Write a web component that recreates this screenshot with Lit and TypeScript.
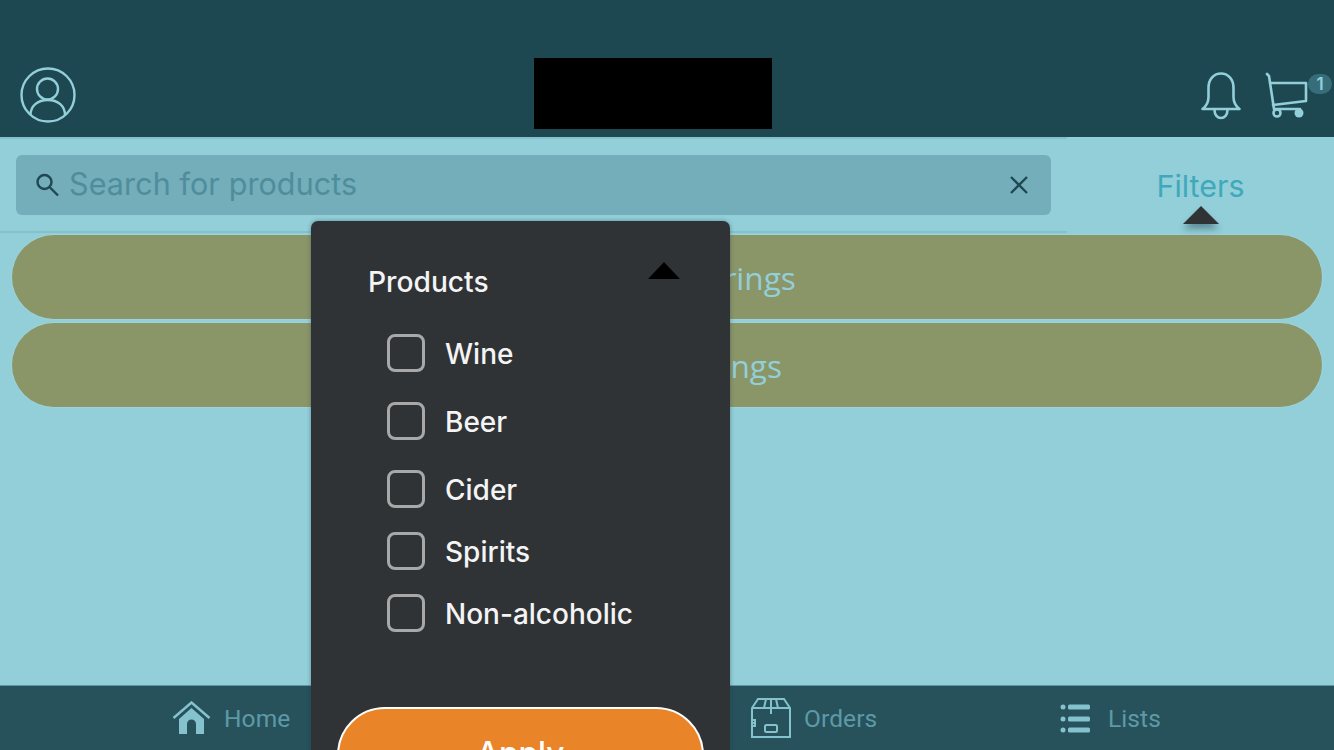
import { LitElement, html, css, svg } from 'lit';
import { customElement } from 'lit/decorators.js';

const FILTERS = ['Wine', 'Beer', 'Cider', 'Spirits', 'Non-alcoholic'];

@customElement('app-root')
export class AppRoot extends LitElement {
  static styles = css`
    :host {
      display: block;
      position: relative;
      width: 1334px;
      height: 750px;
      overflow: hidden;
      background: #92cfd9;
      font-family: Inter, 'Liberation Sans', sans-serif;
    }
    .page {
      display: flex;
      flex-direction: column;
      height: 750px;
    }
    .header {
      height: 137px;
      flex: none;
      background: #1e4851;
      display: flex;
      align-items: flex-end;
      justify-content: space-between;
      box-sizing: border-box;
      position: relative;
    }
    .avatar {
      width: 58px;
      height: 58px;
      margin: 0 0 13px 19px;
    }
    .logo {
      width: 238px;
      height: 71px;
      background: #000;
      margin: 0 0 8px 0;
      position: absolute;
      left: 534px;
    }
    .actions {
      display: flex;
      align-items: flex-start;
      gap: 22px;
      margin: 0 2px 17px 0;
    }
    .bell {
      width: 42px;
      height: 48px;
    }
    .cart-wrap {
      position: relative;
      width: 67px;
      height: 48px;
    }
    .cart {
      width: 46px;
      height: 48px;
    }
    .badge {
      position: absolute;
      right: 0;
      top: 2px;
      width: 24px;
      height: 20px;
      border-radius: 10px;
      background: #376d79;
      color: #92cfd9;
      font-size: 17px;
      font-weight: 600;
      line-height: 20px;
      text-align: center;
    }
    .search-row {
      height: 96px;
      flex: none;
      display: flex;
      align-items: flex-start;
      box-sizing: border-box;
      padding-top: 18px;
      position: relative;
    }
    .search-row::before,
    .search-row::after {
      content: '';
      position: absolute;
      left: 0;
      width: 1067px;
      height: 2px;
      background: #85c1cb;
    }
    .search-row::before {
      top: 0;
    }
    .search-row::after {
      top: 94px;
    }
    .search {
      width: 1035px;
      height: 60px;
      margin-left: 16px;
      border-radius: 6px;
      background: #73aeba;
      display: flex;
      align-items: center;
      box-sizing: border-box;
      padding: 0 20px;
    }
    .search svg.mag {
      width: 24px;
      height: 24px;
      flex: none;
      margin-right: 9px;
    }
    .search span {
      flex: 1;
      color: #4f8d9c;
      font-size: 30.5px;
      letter-spacing: 0.1px;
      line-height: 58px;
      height: 60px;
    }
    .search svg.x {
      width: 24px;
      height: 24px;
      flex: none;
    }
    .filters {
      flex: 1;
      position: relative;
      text-align: center;
      color: #3fa9bb;
      font-size: 30.4px;
      line-height: 62px;
      padding-left: 16px;
    }
    .filters i {
      position: absolute;
      left: 132px;
      top: 51px;
      width: 0;
      height: 0;
      border-left: 18px solid transparent;
      border-right: 18px solid transparent;
      border-bottom: 18px solid #303336;
      filter: drop-shadow(0 5px 3px rgba(30, 60, 70, 0.45));
    }
    .pills {
      flex: 1;
      display: flex;
      flex-direction: column;
      gap: 4px;
      padding: 2px 12px 0;
    }
    .pill {
      height: 84px;
      flex: none;
      box-sizing: border-box;
      border-radius: 42px;
      background: #8b9668;
      box-shadow: 0 0 0 1px #9ad3dc;
      color: #92cfd9;
      font-family: 'Open Sans', sans-serif;
      font-size: 31.6px;
      display: flex;
      align-items: center;
      justify-content: center;
    }
    .tabbar {
      height: 65px;
      flex: none;
      background: #27525c;
      border-top: 1px solid #5b9aa5;
      box-sizing: border-box;
      display: grid;
      grid-template-columns: 579px 308px auto;
      padding-left: 172px;
      align-items: center;
      font-family: Roboto, sans-serif;
      font-size: 24.5px;
      letter-spacing: 0.1px;
      color: #5d9aa6;
    }
    .tab {
      display: flex;
      align-items: center;
      gap: 13px;
      white-space: nowrap;
    }
    .tab svg {
      flex: none;
    }
    .popover {
      position: absolute;
      left: 311px;
      top: 221px;
      width: 419px;
      height: 560px;
      box-sizing: border-box;
      border-radius: 7px;
      background: #303336;
      color: #f4f4f4;
      box-shadow: 0 0 4px rgba(30, 60, 70, 0.45);
      padding: 44px 0 0 57px;
    }
    .group {
      display: flex;
      justify-content: space-between;
      align-items: flex-start;
      padding-right: 50px;
      font-size: 28.2px;
      font-weight: 500;
      line-height: 34px;
      height: 34px;
    }
    .group i {
      width: 0;
      height: 0;
      margin-top: -3px;
      border-left: 16px solid transparent;
      border-right: 16px solid transparent;
      border-bottom: 17px solid #000;
    }
    .options {
      margin: 35px 0 0 19px;
      display: flex;
      flex-direction: column;
    }
    .option {
      display: flex;
      align-items: center;
      gap: 20px;
      height: 38px;
      font-size: 28px;
      font-weight: 500;
    }
    .option span {
      padding-top: 1px;
    }
    .box {
      width: 38px;
      height: 38px;
      box-sizing: border-box;
      border: 3px solid #a8a8a8;
      border-radius: 8px;
    }
    .apply {
      position: absolute;
      left: 26px;
      top: 486px;
      width: 367px;
      height: 120px;
      box-sizing: border-box;
      border: 2px solid #fff;
      border-radius: 48px;
      background: #ea8429;
      color: #fff;
      font-size: 31.5px;
      font-weight: 500;
      text-align: center;
      padding-top: 24px;
    }
  `;

  private line(d: string) {
    return svg`<path d=${d} fill="none" stroke="#92cfd9" stroke-width="2.6" stroke-linecap="round" stroke-linejoin="round"/>`;
  }

  render() {
    // gaps between rows are uneven in the reference
    const gaps = [30, 30, 24, 24, 0];
    return html`
      <div class="page">
        <div class="header">
          <svg class="avatar" viewBox="0 0 58 58">
            <circle cx="29" cy="29" r="26.5" fill="none" stroke="#92cfd9" stroke-width="2.4" />
            <circle cx="28.5" cy="23" r="10.5" fill="none" stroke="#92cfd9" stroke-width="2.4" />
            <path d="M11.5 49c0-9 7-15 17.300-15s17.200 6 17.200 15" fill="none" stroke="#92cfd9" stroke-width="2.4" />
          </svg>
          <div class="logo"></div>
          <div class="actions">
            <svg class="bell" viewBox="0 0 42 48">
              ${this.line('M1.500 37c4-3 6-7 6-12V16C7.500 7 13 1.500 20 1.500S32.500 7 32.500 16v9c0 5 2 9 6 12z')}
              ${this.line('M13.500 38c0 5 3 8 6.500 8s6.500-3 6.500-8')}
            </svg>
            <div class="cart-wrap">
              <svg class="cart" viewBox="0 0 46 48">
                ${this.line('M2 2l2 2 5 33h26')}
                ${this.line('M5 11h36v18l-33 4')}
                <circle cx="12" cy="41" r="3.500" fill="none" stroke="#92cfd9" stroke-width="2.6" />
                <circle cx="34" cy="41" r="4.500" fill="#92cfd9" />
              </svg>
              <div class="badge">1</div>
            </div>
          </div>
        </div>
        <div class="search-row">
          <div class="search">
            <svg class="mag" viewBox="0 0 24 24">
              <circle cx="8.500" cy="9" r="7" fill="none" stroke="#1f4852" stroke-width="2.400" />
              <path d="M14 14.500l8 8" stroke="#1f4852" stroke-width="2.400" />
            </svg>
            <span>Search for products</span>
            <svg class="x" viewBox="0 0 24 24">
              <path d="M4 4l16 16M20 4L4 20" stroke="#1f4852" stroke-width="2.400" />
            </svg>
          </div>
          <div class="filters">Filters<i></i></div>
        </div>
        <div class="pills">
          <div class="pill">Current Offerings</div>
          <div class="pill">Other Offerings</div>
        </div>
        <div class="tabbar">
          <div class="tab">
            <svg width="39" height="34" viewBox="0 0 39 34">
              <path d="M1.500 17L19.500 1.500 37.500 17" fill="none" stroke="#84c2cd" stroke-width="2.500" />
              <path d="M7 18L19.500 7 32 18v15H24V23a4.500 4.500 0 0 0-9 0v10H7z" fill="#84c2cd" />
            </svg>
            <span>Home</span>
          </div>
          <div class="tab">
            <svg width="40" height="40" viewBox="0 0 40 40" fill="none" stroke="#84c2cd" stroke-width="2">
              <path d="M1 10L7 1h26l6 9v29H1zM1 10h38M20 1v15" />
              <path d="M15 1l-2 9M25 1l2 9" />
              <path d="M1 22h3v3H1M1 25h3v3H1" />
              <rect x="14" y="27" width="12" height="7" rx="1.500" />
            </svg>
            <span>Orders</span>
          </div>
          <div class="tab">
            <svg width="36" height="32" viewBox="0 0 36 32" fill="#84c2cd">
              <circle cx="4" cy="5" r="2.500" />
              <circle cx="4" cy="17" r="2.500" />
              <circle cx="4" cy="28" r="2.500" />
              <rect x="9" y="2.500" width="22" height="5" rx="1.500" />
              <rect x="9" y="14.500" width="22" height="5" rx="1.500" />
              <rect x="9" y="25.500" width="22" height="5" rx="1.500" />
            </svg>
            <span>Lists</span>
          </div>
        </div>
      </div>
      <div class="popover">
        <div class="group"><span>Products</span><i></i></div>
        <div class="options">
          ${FILTERS.map(
            (f, i) => html`
              <div class="option" style="margin-bottom:${gaps[i]}px">
                <div class="box"></div>
                <span>${f}</span>
              </div>
            `
          )}
        </div>
        <div class="apply">Apply</div>
      </div>
    `;
  }
}
